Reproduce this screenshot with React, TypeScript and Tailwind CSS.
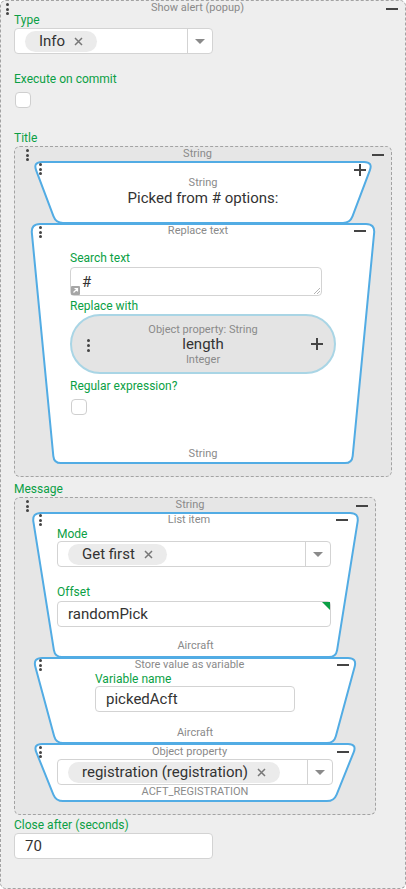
import React from "react";

const INSET = 23;

function roundedPoly(pts: number[][], rs: number[]) {
  let d = "";
  pts.forEach((c, i) => {
    const a = pts[(i + pts.length - 1) % pts.length];
    const b = pts[(i + 1) % pts.length];
    const r = rs[i];
    const la = Math.hypot(a[0] - c[0], a[1] - c[1]);
    const lb = Math.hypot(b[0] - c[0], b[1] - c[1]);
    const s = [c[0] + ((a[0] - c[0]) * r) / la, c[1] + ((a[1] - c[1]) * r) / la];
    const e = [c[0] + ((b[0] - c[0]) * r) / lb, c[1] + ((b[1] - c[1]) * r) / lb];
    d += `${i === 0 ? "M" : "L"}${s[0]},${s[1]} Q${c[0]},${c[1]} ${e[0]},${e[1]} `;
  });
  return d + "Z";
}

// block outline: trapezoid drawn behind the content
function Trap({
  w,
  h,
  className,
  children,
}: {
  w: number;
  h: number;
  className: string;
  children: React.ReactNode;
}) {
  const pts = [
    [1, 1],
    [w - 1, 1],
    [w - 1 - INSET, h - 1],
    [1 + INSET, h - 1],
  ];
  return (
    <div className={`relative ${className}`}>
      <svg className="absolute left-0 top-0" width={w} height={h}>
        <path d={roundedPoly(pts, [9, 9, 7, 7])} fill="#ffffff" stroke="#52ace4" strokeWidth="2" />
      </svg>
      <div className="relative flow-root h-full">{children}</div>
    </div>
  );
}

function Kebab({ className = "", gap = "gap-[1.5px]" }: { className?: string; gap?: string }) {
  return (
    <div className={`flex shrink-0 flex-col ${gap} ${className}`}>
      <span className="h-[3px] w-[3px] rounded-full bg-[#444]" />
      <span className="h-[3px] w-[3px] rounded-full bg-[#444]" />
      <span className="h-[3px] w-[3px] rounded-full bg-[#444]" />
    </div>
  );
}

function Minus({ className = "" }: { className?: string }) {
  return <div className={`h-[2px] w-[12px] shrink-0 bg-[#444] ${className}`} />;
}

function Plus({ className = "" }: { className?: string }) {
  return (
    <svg className={`shrink-0 ${className}`} width="12" height="12" viewBox="0 0 12 12">
      <path d="M6 0v12M0 6h12" stroke="#444" strokeWidth="2" />
    </svg>
  );
}

function Head({
  title,
  className,
  textClass = "",
  kebabClass = "mt-[2px]",
  minusClass = "mt-[7px]",
}: {
  title: string;
  className: string;
  textClass?: string;
  kebabClass?: string;
  minusClass?: string;
}) {
  return (
    <div className={`flex items-start ${className}`}>
      <Kebab className={kebabClass} />
      <div className={`flex-1 text-center text-[11px] leading-[14px] text-[#8a8a8a] ${textClass}`}>{title}</div>
      <Minus className={minusClass} />
    </div>
  );
}

function XIcon() {
  return (
    <svg width="9" height="9" viewBox="0 0 9 9">
      <path d="M1 1l7 7M8 1L1 8" stroke="#777" strokeWidth="1.5" />
    </svg>
  );
}

function Label({ text, className = "" }: { text: string; className?: string }) {
  return <div className={`text-[12px] text-[#0b9f45] ${className}`}>{text}</div>;
}

function Select({ w, value }: { w: string; value: string }) {
  return (
    <div className={`flex h-[26px] ${w} rounded-[4px] border border-[#d3d3d3] bg-white`}>
      <div className="flex flex-1 items-center pl-[10px]">
        <span className="flex h-[21px] items-center gap-[9px] rounded-full bg-[#ebebeb] px-[14px] text-[15px] text-[#333]">
          {value}
          <XIcon />
        </span>
      </div>
      <div className="flex w-[25px] items-center justify-center border-l border-[#d3d3d3]">
        <svg width="10" height="5" viewBox="0 0 10 5">
          <path d="M0 0h10L5 5z" fill="#8a8a8a" />
        </svg>
      </div>
    </div>
  );
}

function Input({ w, value, mark = false }: { w: string; value: string; mark?: boolean }) {
  return (
    <div className={`relative flex h-[26px] ${w} items-center rounded-[4px] border border-[#d3d3d3] bg-white pl-[10px] text-[15px] text-[#333]`}>
      {value}
      {mark && (
        <svg className="absolute right-0 top-0" width="8" height="8" viewBox="0 0 8 8">
          <path d="M0 0h8v8z" fill="#0b9f45" />
        </svg>
      )}
    </div>
  );
}

function Checkbox({ className = "" }: { className?: string }) {
  return <div className={`ml-[1px] h-[16px] w-[16px] rounded-[4px] border border-[#cfcfcf] bg-white ${className}`} />;
}

function Gray({ text, className = "" }: { text: string; className?: string }) {
  return <div className={`text-center text-[11px] text-[#8a8a8a] ${className}`}>{text}</div>;
}

export default function App() {
  return (
    <div className="h-[889px] w-[406px] bg-white font-['Roboto',sans-serif]">
      <div className="h-[889px] w-[406px] rounded-[6px] border border-dashed border-[#a3a3a3] bg-[#eeeeee] px-[13px]">
        <Head title="Show alert (popup)" className="-mx-[13px] h-[12px] pl-[5px] pr-[7px]" />

        <Label text="Type" className="h-[15px] leading-[15px]" />
        <Select w="w-[199px]" value="Info" />

        <Label text="Execute on commit" className="mt-[18px] h-[15px] leading-[15px]" />
        <Checkbox className="mt-[5px]" />

        <Label text="Title" className="mt-[23px] h-[15px] leading-[15px]" />
        <div className="w-[378px] rounded-[6px] border border-dashed border-[#a3a3a3] bg-[#e6e6e6] pb-[12px]">
          <Head title="String" className="h-[14px] pl-[11px] pr-[7px]" textClass="pr-[6px]" />

          <Trap w={342} h={63} className="ml-[17px] h-[63px] w-[342px]">
            <div className="flex h-[14px] items-start justify-between pl-[7px] pr-[8px]">
              <Kebab className="mt-[2px]" />
              <Plus className="mt-[3px]" />
            </div>
            <div className="text-center">
              <Gray text="String" className="leading-[16px]" />
              <div className="text-[15px] leading-[14px] text-[#333]">Picked from # options:</div>
            </div>
          </Trap>

          <Trap w={346} h={241} className="-mt-[1px] ml-[15px] h-[241px] w-[346px]">
            <Head title="Replace text" className="mt-[1px] h-[14px] pl-[9px] pr-[10px]" minusClass="mt-[6px]" />
            <div className="pl-[40px]">
              <Label text="Search text" className="mt-[13px] h-[15px] leading-[15px]" />
              <div className="relative mt-[1px] h-[29px] w-[252px] rounded-[4px] border border-[#d3d3d3] bg-white pl-[11px] pt-[5px] text-[15px] leading-[18px] text-[#333]">
                #
                <svg className="absolute left-0 top-[18px]" width="9" height="9" viewBox="0 0 9 9">
                  <rect width="9" height="9" rx="1" fill="#a6a6a6" />
                  <path d="M2.5 6.5L6.5 2.5M3.5 2.5h3v3" stroke="#fff" strokeWidth="1.2" fill="none" />
                </svg>
                <svg className="absolute bottom-[1px] right-[1px]" width="6" height="6" viewBox="0 0 6 6">
                  <path d="M6 0L0 6M6 3L3 6" stroke="#b5b5b5" strokeWidth="1" />
                </svg>
              </div>
              <Label text="Replace with" className="mt-[3px] h-[15px] leading-[15px]" />
              <div className="flex h-[60px] w-[266px] items-center rounded-full border-2 border-[#a9d5e5] bg-[#e4e4e4] pl-[15px] pr-[11px]">
                <Kebab className="mt-[2px]" gap="gap-[2px]" />
                <div className="flex-1 pl-[5px] text-center">
                  <Gray text="Object property: String" className="leading-[15px]" />
                  <div className="text-[15px] leading-[15px] text-[#333]">length</div>
                  <Gray text="Integer" className="leading-[15px]" />
                </div>
                <Plus />
              </div>
              <Label text="Regular expression?" className="mt-[5px] h-[15px] leading-[15px]" />
              <Checkbox className="mt-[5px]" />
            </div>
            <Gray text="String" className="mt-[32px] leading-[14px]" />
          </Trap>
        </div>

        <Label text="Message" className="mt-[5px] h-[15px] leading-[15px]" />
        <div className="w-[362px] rounded-[6px] border border-dashed border-[#a3a3a3] bg-[#e6e6e6] pb-[12px]">
          <Head title="String" className="h-[14px] pl-[11px] pr-[7px]" textClass="pr-[5px]" />

          <Trap w={329} h={146} className="ml-[16px] h-[146px] w-[329px]">
            <Head
              title="List item"
              className="mt-[1px] h-[14px] pl-[8px] pr-[12px]"
              kebabClass="mt-[1px]"
              minusClass="mt-[6px]"
            />
            <div className="pl-[26px]">
              <Label text="Mode" className="h-[14px] leading-[14px]" />
              <Select w="w-[274px]" value="Get first" />
              <Label text="Offset" className="mt-[18px] h-[15px] leading-[15px]" />
              <div className="mt-[1px]">
                <Input w="w-[274px]" value="randomPick" mark />
              </div>
            </div>
            <Gray text="Aircraft" className="mt-[12px] leading-[14px]" />
          </Trap>

          <Trap w={326} h={87} className="-mt-[1px] ml-[17px] h-[87px] w-[326px]">
            <Head
              title="Store value as variable"
              className="mt-[1px] h-[14px] pl-[7px] pr-[9px]"
              kebabClass="mt-[1px]"
              minusClass="mt-[6px]"
            />
            <div className="pl-[63px]">
              <Label text="Variable name" className="h-[14px] leading-[14px]" />
              <Input w="w-[200px]" value="pickedAcft" />
            </div>
            <Gray text="Aircraft" className="mt-[14px] leading-[14px]" />
          </Trap>

          <Trap w={326} h={59} className="-mt-[1px] ml-[17px] h-[59px] w-[326px]">
            <Head
              title="Object property"
              className="mt-[2px] h-[14px] pl-[7px] pr-[9px]"
              kebabClass="mt-[1px]"
              minusClass="mt-[6px]"
            />
            <div className="pl-[25px]">
              <Select w="w-[276px]" value="registration (registration)" />
            </div>
            <Gray text="ACFT_REGISTRATION" className="mt-[1px] leading-[12px]" />
          </Trap>
        </div>

        <Label text="Close after (seconds)" className="mt-[3px] h-[15px] leading-[15px]" />
        <Input w="w-[199px]" value="70" />
      </div>
    </div>
  );
}
